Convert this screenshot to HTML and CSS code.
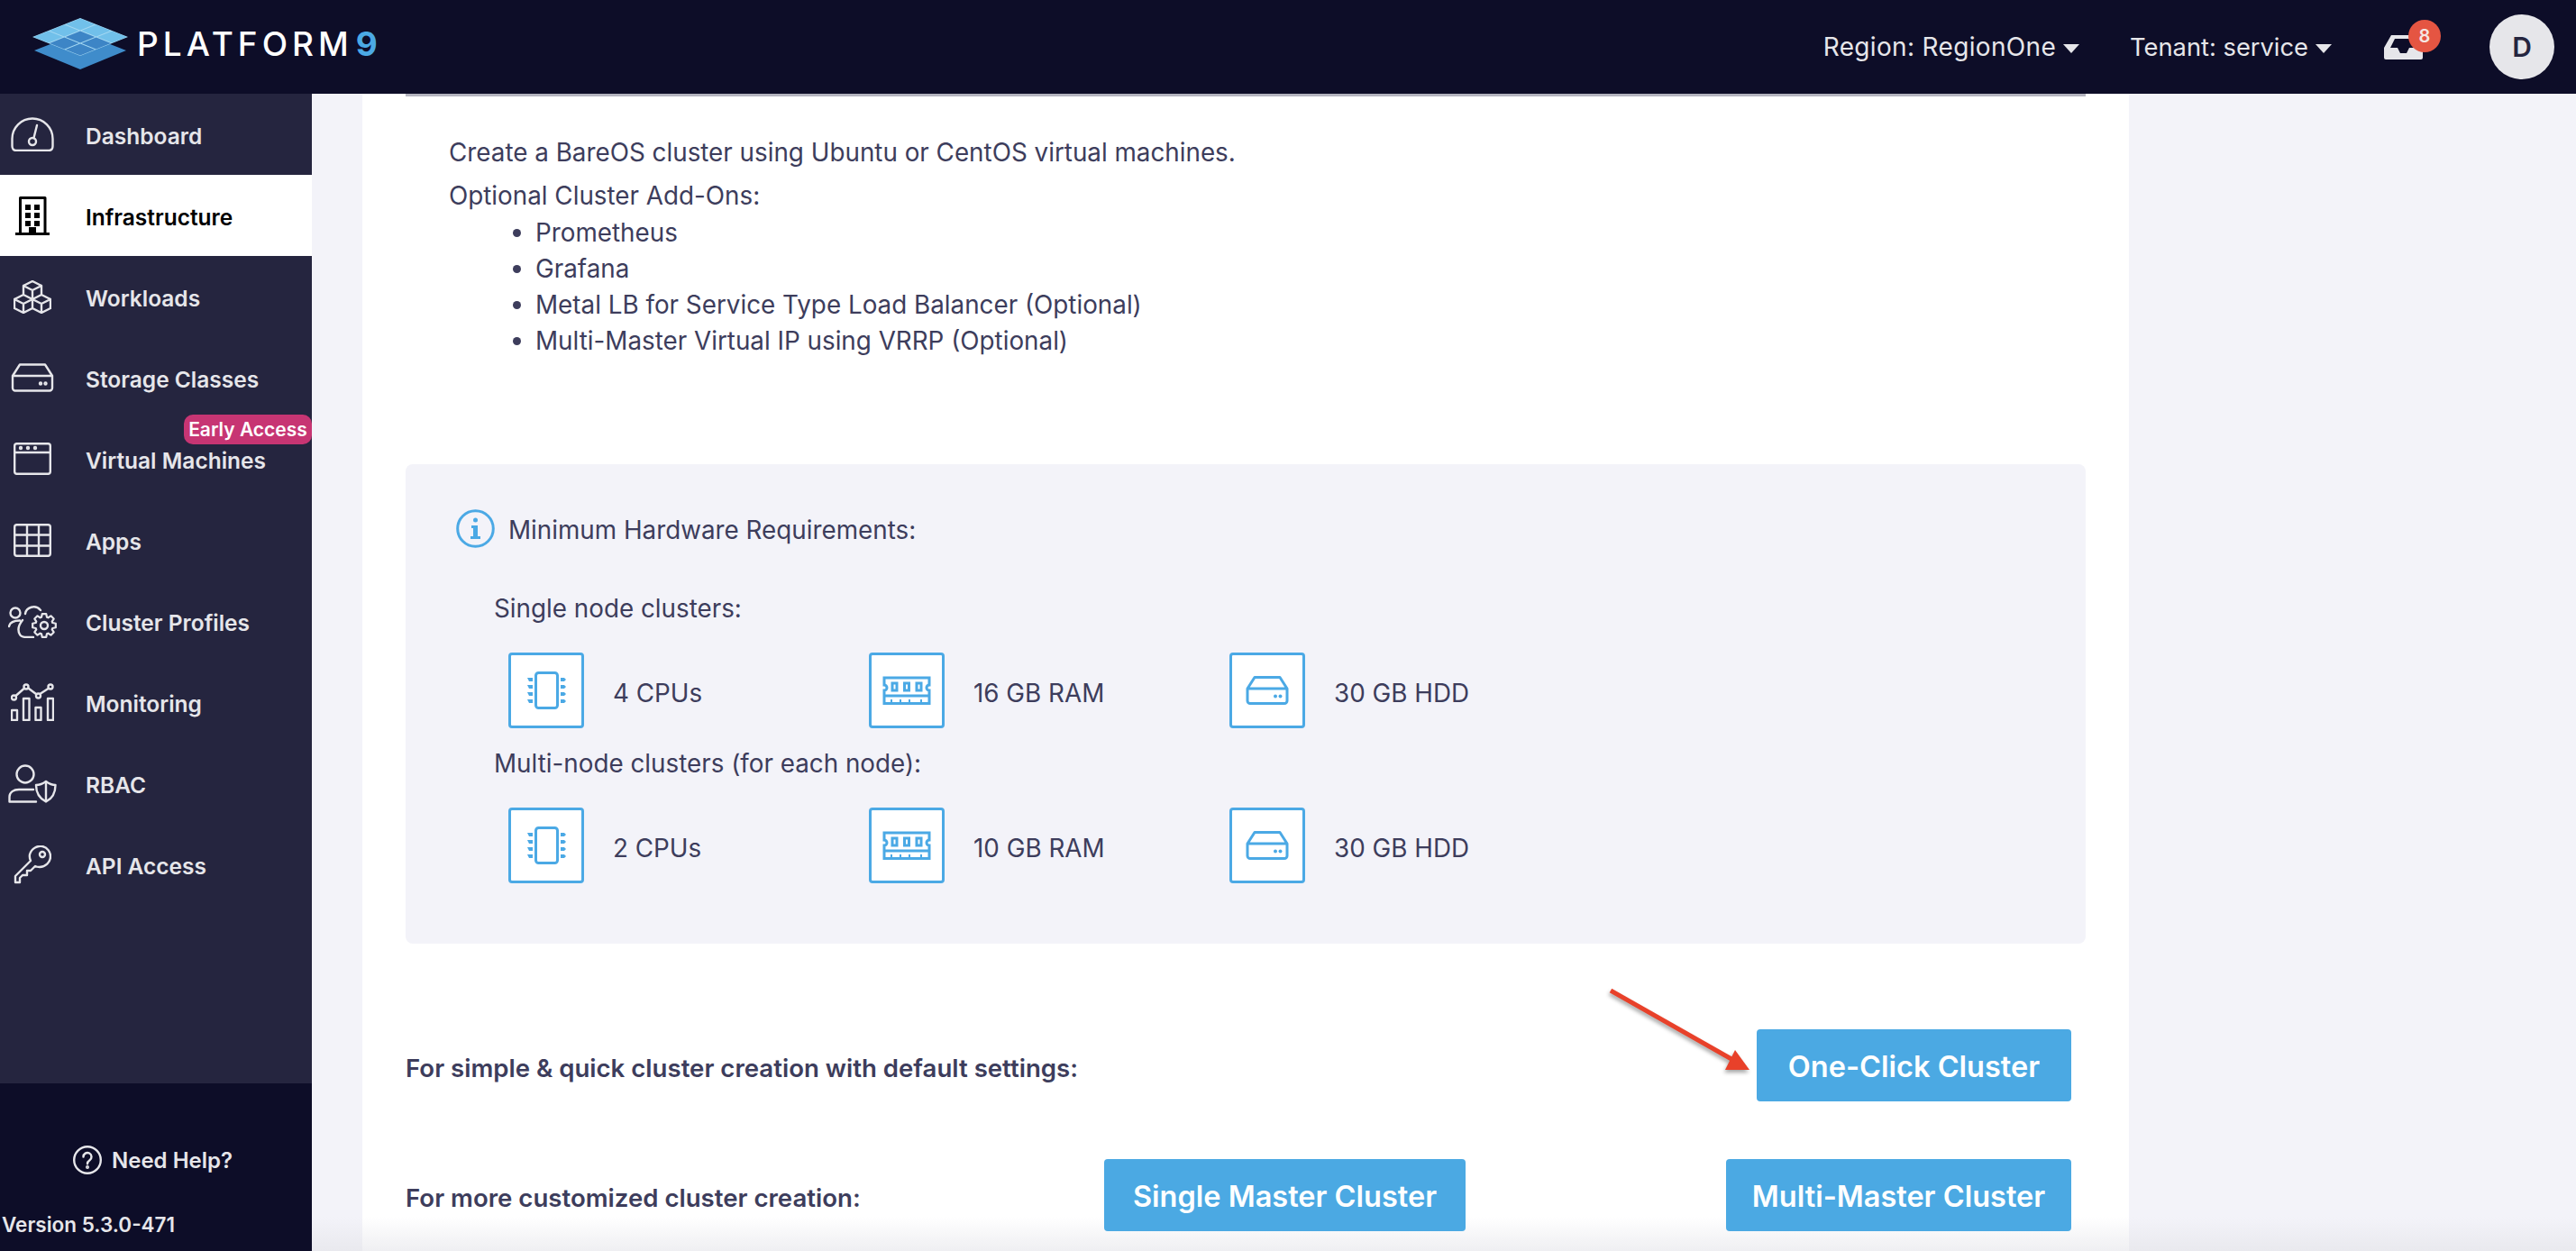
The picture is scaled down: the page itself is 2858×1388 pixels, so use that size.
FILE: index.html
```html
<!DOCTYPE html>
<html lang="en">
<head>
    <meta charset="UTF-8">
    <title>Platform9 - Infrastructure</title>
    <link rel="stylesheet" href="styles.css">
</head>
<body>

<svg class="defs" width="0" height="0">
    <symbol id="i-chip" viewBox="0 0 43 42">
        <rect x="9.5" y="1.5" width="24" height="39" rx="3" fill="none" stroke="currentColor" stroke-width="3"/>
        <path fill="currentColor" d="M0 7h6v4H2zM0 15h6v4H2zM0 23h6v4H2zM0 31h6v4H2zM37 7h4l2 2-2 2h-4zM37 15h4l2 2-2 2h-4zM37 23h4l2 2-2 2h-4zM37 31h4l2 2-2 2h-4z"/>
    </symbol>
    <symbol id="i-ram" viewBox="0 0 54 32">
        <g fill="none" stroke="currentColor" stroke-width="3">
            <path d="M2 2H52V10a3 3 0 0 0 0 6V30.5H2V16a3 3 0 0 0 0-6Z"/>
            <path d="M2 22H52"/>
            <rect x="11" y="8" width="5" height="8"/>
            <rect x="24.500" y="8" width="5" height="8"/>
            <rect x="38" y="8" width="5" height="8"/>
        </g>
        <path stroke="currentColor" stroke-width="2" d="M10 26v3M20 26v3M30 26v3M43 26v3"/>
    </symbol>
    <symbol id="i-hdd" viewBox="0 0 48 32">
        <path fill="none" stroke="currentColor" stroke-width="3" stroke-linejoin="round" d="M10 1.500H38L46 14V27.500a3 3 0 0 1-3 3H5a3 3 0 0 1-3-3V14ZM2 14H46"/>
        <circle cx="33" cy="22.500" r="2" fill="currentColor"/>
        <circle cx="38.500" cy="22.500" r="2" fill="currentColor"/>
    </symbol>
</svg>

<div class="page">
    <header class="topbar">
        <div class="brand">
            <svg class="brand-mark" width="106" height="57" viewBox="0 0 106 57">
                <polygon points="2,36 53,16 104,36 53,57" fill="#3f8ccb"/>
                <polygon points="0,21 53,0 106,21 53,42" fill="#a5d8f2"/>
                <g transform="matrix(17.67 -7 17.67 7 0 21)">
                    <rect x=".04" y=".04" width=".92" height=".92" fill="#71c0ea"/>
                    <rect x="1.040" y=".04" width=".92" height=".92" fill="#71c0ea"/>
                    <rect x="2.040" y=".04" width=".92" height=".92" fill="#71c0ea"/>
                    <rect x="2.040" y="1.040" width=".92" height=".92" fill="#71c0ea"/>
                    <rect x="2.040" y="2.040" width=".92" height=".92" fill="#71c0ea"/>
                    <rect x=".04" y="1.040" width=".92" height=".92" fill="#3d85c6"/>
                    <rect x="1.040" y="1.040" width=".92" height=".92" fill="#3d85c6"/>
                    <rect x=".04" y="2.040" width=".92" height=".92" fill="#3d85c6"/>
                    <rect x="1.040" y="2.040" width=".92" height=".92" fill="#3d85c6"/>
                </g>
            </svg>
            <span class="brand-name">PLATFORM<span class="brand-nine">9</span></span>
        </div>
        <div class="topbar-right">
            <div class="picker picker-region">Region: RegionOne <i class="caret"></i></div>
            <div class="picker picker-tenant">Tenant: service <i class="caret"></i></div>
            <div class="inbox">
                <svg width="43" height="27" viewBox="0 0 43 27">
                    <path fill="#e6e6ea" fill-rule="evenodd" d="M8 0H35L43 14V25a2 2 0 0 1-2 2H2a2 2 0 0 1-2-2V14ZM12 4 7 14H15L18 20H25L28 14H36L31 4Z"/>
                </svg>
                <span class="inbox-count">8</span>
            </div>
            <div class="avatar">D</div>
        </div>
    </header>

    <div class="layout">
        <aside class="sidebar">
            <nav class="nav">
                <a class="nav-item">
                    <span class="nav-icon">
                        <svg width="48" height="38" viewBox="0 0 48 38"><path d="M6 37C3 37 1.500 35 1.500 32V24A22.500 22.500 0 0 1 46.500 24V32C46.500 35 45 37 42 37Z"/><circle cx="24" cy="27" r="4"/><path d="M25.500 23 29 9"/></svg>
                    </span>
                    Dashboard
                </a>
                <a class="nav-item active">
                    <span class="nav-icon">
                        <svg width="38" height="43" viewBox="0 0 38 43"><path stroke-width="3" d="M5.500 41V1.500H33V41M0 41.500H38"/><path fill="#000" stroke="none" d="M11 9h6v6h-6zM21 9h6v6h-6zM11 18h6v6h-6zM21 18h6v6h-6zM11 27h6v6h-6zM21 27h6v6h-6zM15 34h8v7h-8z"/></svg>
                    </span>
                    Infrastructure
                </a>
                <a class="nav-item">
                    <span class="nav-icon">
                        <svg width="42" height="37" viewBox="0 0 42 37"><path d="M21 1 31 6V16L21 21 11 16V6ZM11 6 21 11 31 6M21 11V21M11 16 21 21V31L11 36 1 31V21ZM1 21 11 26 21 21M11 26V36M31 16 41 21V31L31 36 21 31M21 21 31 26 41 21M31 26V36"/></svg>
                    </span>
                    Workloads
                </a>
                <a class="nav-item">
                    <span class="nav-icon">
                        <svg width="48" height="32" viewBox="0 0 48 32"><path d="M10 1.500H38L46 14V27.500a3 3 0 0 1-3 3H5a3 3 0 0 1-3-3V14ZM2 14H46"/><circle cx="33" cy="22.500" r="1" /><circle cx="38.500" cy="22.500" r="1"/></svg>
                    </span>
                    Storage Classes
                </a>
                <a class="nav-item">
                    <span class="nav-icon">
                        <svg width="42" height="36" viewBox="0 0 42 36"><rect x="1.200" y="1.200" width="39.600" height="33.600" rx="2.500"/><path d="M1 11H41"/><circle cx="8" cy="6" r="1"/><circle cx="16" cy="6" r="1"/><circle cx="24" cy="6" r="1"/></svg>
                    </span>
                    Virtual Machines
                    <span class="early-access">Early Access</span>
                </a>
                <a class="nav-item">
                    <span class="nav-icon">
                        <svg width="42" height="37" viewBox="0 0 42 37"><rect x="1.200" y="1.200" width="39.600" height="34.600" rx="2.500"/><path d="M1 12.500H41M1 24.500H41M15 1V36M28 1V36"/></svg>
                    </span>
                    Apps
                </a>
                <a class="nav-item">
                    <span class="nav-icon">
                        <svg width="54" height="37" viewBox="0 0 54 37"><circle cx="8" cy="9" r="5.500"/><path d="M1 24C2 19 7 17.500 13 17.500M19 10C20 3 30-1 36 6M16 17C12 22 10 28 13 33 14 35 17 36 21 36H28"/><polygon transform="translate(40 23) scale(.93)" points="-3.240,-9.990 -2.430,-13.790 2.430,-13.790 3.240,-9.990 4.770,-9.360 8.030,-11.470 11.470,-8.030 9.360,-4.770 9.990,-3.240 13.790,-2.430 13.790,2.430 9.990,3.240 9.360,4.770 11.470,8.030 8.030,11.470 4.770,9.360 3.240,9.990 2.430,13.790 -2.430,13.790 -3.240,9.990 -4.770,9.360 -8.030,11.470 -11.470,8.030 -9.360,4.770 -9.990,3.240 -13.790,2.430 -13.790,-2.430 -9.990,-3.240 -9.360,-4.770 -11.470,-8.030 -8.030,-11.470 -4.770,-9.360"/><circle cx="40" cy="23" r="4"/></svg>
                    </span>
                    Cluster Profiles
                </a>
                <a class="nav-item">
                    <span class="nav-icon">
                        <svg width="48" height="42" viewBox="0 0 48 42"><path d="M5.500 14 14 6.500M20 6 28 12M33 11.500 41.500 6"/><circle cx="3.500" cy="16" r="2.500"/><circle cx="17" cy="4" r="2.500"/><circle cx="30.500" cy="14" r="2.500"/><circle cx="44" cy="4" r="2.500"/><rect x="1" y="30" width="6" height="11"/><rect x="14" y="17" width="6.500" height="24"/><rect x="27.500" y="27" width="6" height="14"/><rect x="41" y="17" width="6" height="24"/></svg>
                    </span>
                    Monitoring
                </a>
                <a class="nav-item">
                    <span class="nav-icon">
                        <svg width="54" height="43" viewBox="0 0 54 43"><circle cx="19" cy="11" r="9.500"/><path d="M28 28H12C6 28 1.500 31 1.500 36V41.500H31"/><path d="M42 19C46 22 49 23 52.500 23 52.500 32 49 38 42 41.500 35 38 31 32 31 23 35 23 38 22 42 19ZM42 19V41"/></svg>
                    </span>
                    RBAC
                </a>
                <a class="nav-item">
                    <span class="nav-icon">
                        <svg width="42" height="43" viewBox="0 0 42 43"><path d="M18 10C20 3 27 0 32 1 38 2 41 8 41 12 41 19 35 24 29 24 27 24 26 24 24 23L19 28H15V33H10L7 36V41H2V34L19 17C18 15 17.500 13 18 10Z"/><circle cx="32" cy="10" r="3"/></svg>
                    </span>
                    API Access
                </a>
            </nav>
            <div class="sidebar-foot">
                <div class="help">
                    <svg width="32" height="32" viewBox="0 0 32 32"><circle cx="16" cy="16" r="14.800"/><path d="M11.500 12.500a4.500 4.500 0 1 1 7 3.700c-1.800 1.200-2.500 2-2.500 4"/><circle cx="16" cy="24" r=".8"/></svg>
                    Need Help?
                </div>
                <div class="version">Version 5.3.0-471</div>
            </div>
        </aside>

        <div class="gutter gutter-left"></div>

        <main class="content">
            <div class="rule"></div>

            <div class="intro">
                <p>Create a BareOS cluster using Ubuntu or CentOS virtual machines.</p>
                <p class="addons-title">Optional Cluster Add-Ons:</p>
                <ul>
                    <li>Prometheus</li>
                    <li>Grafana</li>
                    <li>Metal LB for Service Type Load Balancer (Optional)</li>
                    <li>Multi-Master Virtual IP using VRRP (Optional)</li>
                </ul>
            </div>

            <section class="hardware">
                <div class="hardware-title">
                    <svg width="43" height="43" viewBox="0 0 43 43"><circle cx="21.500" cy="21.500" r="19.800" fill="none" stroke="#4ba9e5" stroke-width="3"/><circle cx="21.500" cy="12" r="2.500" fill="#4ba9e5"/><path fill="#4ba9e5" d="M17 18h7v12h3v3H16v-3h3v-9h-2z"/></svg>
                    <span class="hardware-text">Minimum Hardware Requirements:</span>
                </div>

                <div class="node-label first">Single node clusters:</div>
                <div class="specs">
                    <div class="spec"><span class="spec-box"><svg width="43" height="42"><use href="#i-chip"/></svg></span><span class="spec-text">4 CPUs</span></div>
                    <div class="spec"><span class="spec-box"><svg width="54" height="32"><use href="#i-ram"/></svg></span><span class="spec-text">16 GB RAM</span></div>
                    <div class="spec"><span class="spec-box"><svg width="48" height="32"><use href="#i-hdd"/></svg></span><span class="spec-text">30 GB HDD</span></div>
                </div>

                <div class="node-label">Multi-node clusters (for each node):</div>
                <div class="specs">
                    <div class="spec"><span class="spec-box"><svg width="43" height="42"><use href="#i-chip"/></svg></span><span class="spec-text">2 CPUs</span></div>
                    <div class="spec"><span class="spec-box"><svg width="54" height="32"><use href="#i-ram"/></svg></span><span class="spec-text">10 GB RAM</span></div>
                    <div class="spec"><span class="spec-box"><svg width="48" height="32"><use href="#i-hdd"/></svg></span><span class="spec-text">30 GB HDD</span></div>
                </div>
            </section>

            <div class="action-row quick">
                <span class="action-label">For simple &amp; quick cluster creation with default settings:</span>
                <button class="btn btn-oneclick">One-Click Cluster</button>
            </div>
            <div class="action-row custom">
                <span class="action-label">For more customized cluster creation:</span>
                <button class="btn btn-single">Single Master Cluster</button>
                <button class="btn btn-multi">Multi-Master Cluster</button>
            </div>
        </main>

        <div class="gutter"></div>
    </div>

    <!-- annotation drawn over the screenshot -->
    <svg class="arrow" width="170" height="100" viewBox="0 0 170 100">
        <path d="M2 2 136 78" fill="none" stroke="#e8412a" stroke-width="5"/>
        <polygon points="140,68 156,90 129,90" fill="#e8412a"/>
    </svg>
</div>

</body>
</html>
```

FILE: styles.css
```css
* {
    box-sizing: border-box;
}
body {
    margin: 0;
    font-family: Inter, "Liberation Sans", sans-serif;
    color: #3d3d5c;
}
.defs {
    position: absolute;
}
.page {
    position: relative;
    height: 1388px;
    display: flex;
    flex-direction: column;
    overflow: hidden;
    background: #f3f3f9;
}

/* top bar */
.topbar {
    height: 104px;
    flex: none;
    display: flex;
    align-items: center;
    justify-content: space-between;
    padding: 0 24px 0 36px;
    background: #0d0d28;
}
.brand {
    display: flex;
    align-items: center;
    gap: 10px;
    margin-top: -8px;
}
.brand-name {
    font-size: 37px;
    font-weight: 500;
    letter-spacing: 5px;
    color: #fff;
}
.brand-nine {
    margin-left: 3px;
    color: #4ba9e5;
    font-weight: 700;
}
.topbar-right {
    display: flex;
    align-items: center;
    color: #e6e6ea;
    font-size: 28px;
}
.picker {
    display: flex;
    align-items: center;
    gap: 8px;
}
.picker-region {
    letter-spacing: .33px;
}
.picker-tenant {
    margin-left: 56px;
    font-size: 27.300px;
}
.caret {
    width: 0;
    height: 0;
    margin-top: 4px;
    border-left: 9px solid transparent;
    border-right: 9px solid transparent;
    border-top: 10px solid #e6e6ea;
}
.inbox {
    position: relative;
    width: 43px;
    height: 27px;
    margin-left: 58px;
    display: flex;
}
.inbox-count {
    position: absolute;
    top: -17px;
    left: 27px;
    width: 36px;
    height: 36px;
    border-radius: 50%;
    background: #e55542;
    color: #f5e6e2;
    font-size: 20px;
    font-weight: 600;
    line-height: 36px;
    text-align: center;
}
.avatar {
    width: 72px;
    height: 72px;
    margin-left: 74px;
    border-radius: 50%;
    background: #e6e6ea;
    color: #25253f;
    font-size: 30px;
    font-weight: 600;
    line-height: 72px;
    text-align: center;
}

/* sidebar */
.layout {
    flex: 1;
    display: flex;
    min-height: 0;
}
.sidebar {
    width: 346px;
    flex: none;
    display: flex;
    flex-direction: column;
    background: #25253f;
}
.nav {
    flex: 1;
}
.nav-item {
    position: relative;
    height: 90px;
    display: flex;
    align-items: center;
    gap: 23px;
    padding-top: 3px;
    color: #e6e6ea;
    font-size: 24.500px;
    font-weight: 600;
}
.nav-item.active {
    background: #fff;
    color: #000;
}
.nav-icon {
    width: 72px;
    margin-top: -3px;
    display: flex;
    justify-content: center;
}
.nav-icon svg,
.help svg {
    fill: none;
    stroke: currentColor;
    stroke-width: 2.4;
    stroke-linejoin: round;
    stroke-linecap: round;
}
.early-access {
    position: absolute;
    top: -4px;
    right: 0;
    height: 33px;
    width: 142px;
    border-radius: 10px;
    background: #c73573;
    color: #fff;
    font-size: 21px;
    font-weight: 600;
    line-height: 33px;
    text-align: center;
}
.sidebar-foot {
    height: 186px;
    flex: none;
    padding-top: 70px;
    background: #0d0d28;
    color: #e6e6ea;
    font-size: 24px;
    font-weight: 600;
}
.help {
    height: 30px;
    display: flex;
    align-items: center;
    gap: 11px;
    padding-left: 81px;
}
.version {
    margin-top: 42px;
    padding-left: 2px;
    font-size: 22.500px;
    line-height: 30px;
}

/* main column */
.content {
    width: 1960px;
    flex: none;
    padding: 0 48px;
    background: linear-gradient(#fff calc(100% - 38px), #efeff2);
}
.rule {
    height: 3px;
    background: #b4b4bf;
}
.intro {
    margin-top: 42px;
    padding-left: 48px;
    font-size: 27.800px;
    line-height: 40px;
}
.intro p {
    margin: 0;
}
.intro .addons-title {
    margin-top: 8px;
}
.intro ul {
    margin: 1px 0 0;
    padding-left: 96px;
}
.hardware {
    margin-top: 117px;
    padding: 50px 0 67px 56px;
    border-radius: 8px;
    background: #f3f3f9;
    font-size: 27.800px;
}
.hardware-title {
    display: flex;
    align-items: center;
    gap: 15px;
    height: 43px;
}
.hardware-text {
    margin-top: 2px;
}
.node-label {
    margin-top: 19px;
    padding-left: 42px;
    line-height: 40px;
}
.node-label.first {
    margin-top: 47px;
}
.specs {
    display: flex;
    margin-top: 29px;
    padding-left: 58px;
}
.spec {
    width: 400px;
    display: flex;
    align-items: center;
    gap: 32px;
}
.spec-text {
    margin-top: 6px;
}
.spec-box {
    width: 84px;
    height: 84px;
    display: flex;
    align-items: center;
    justify-content: center;
    border: 3px solid #4ba9e5;
    border-radius: 4px;
    background: #fff;
    color: #4ba9e5;
}

/* action rows */
.action-row {
    height: 80px;
    display: flex;
    align-items: center;
    padding-right: 16px;
}
.action-label {
    margin-top: 5px;
    font-size: 27.600px;
    font-weight: 600;
}
.quick {
    margin-top: 95px;
    justify-content: space-between;
}
.custom {
    margin-top: 64px;
}
.custom .action-label {
    width: 775px;
}
.btn {
    height: 80px;
    padding: 3px 0 0;
    border: 0;
    border-radius: 4px;
    background: #4ba9e3;
    color: #fff;
    font-family: inherit;
    font-size: 32.500px;
    font-weight: 600;
}
.btn-oneclick {
    width: 349px;
}
.btn-single {
    width: 401px;
}
.btn-multi {
    width: 383px;
    margin-left: auto;
}
.gutter {
    flex: 1;
    background: linear-gradient(#f3f3f9 calc(100% - 38px), #e9e9ee);
}
.gutter-left {
    width: 56px;
    flex: none;
}
.arrow {
    position: absolute;
    left: 1785px;
    top: 1097px;
    filter: drop-shadow(-1px 3px 2px rgba(0, 0, 0, .35));
}
```
